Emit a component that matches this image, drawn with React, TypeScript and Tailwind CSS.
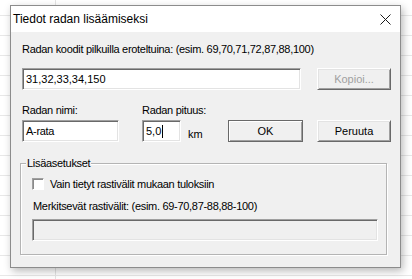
const sunken =
  "bg-white border border-t-[#a0a0a0] border-l-[#a0a0a0] border-b-white border-r-white shadow-[inset_1px_1px_0_#696969,inset_-1px_-1px_0_#e3e3e3]";

function Button({ label, disabled, isDefault, className }: { label: string; disabled?: boolean; isDefault?: boolean; className?: string }) {
  return (
    <div
      className={
        "flex items-center justify-center bg-[#f0f0f0] text-[11px] " +
        (isDefault
          ? "border border-[#696969] shadow-[inset_1px_1px_0_#fff,inset_-1px_-1px_0_#a0a0a0] "
          : "border border-t-white border-l-white border-b-[#696969] border-r-[#696969] shadow-[inset_1px_1px_0_#e3e3e3,inset_-1px_-1px_0_#a0a0a0] ") +
        (disabled ? "text-[#a0a0a0] " : "text-black ") +
        (className ?? "")
      }
    >
      {label}
    </div>
  );
}

export default function App() {
  return (
    <div
      className="w-[412px] h-[279px] overflow-hidden bg-white pl-[10px] pt-[5px] bg-[linear-gradient(to_right,transparent_55px,#e4e4e4_55px,#e4e4e4_56px,transparent_56px),repeating-linear-gradient(to_bottom,transparent_0px,transparent_15px,#e8e8e8_15px,#e8e8e8_16px,transparent_16px,transparent_20px)]"
      style={{ fontFamily: '"Liberation Sans", Arial, sans-serif' }}
    >
      <div className="w-[391px] h-[263px] border border-[#8c8c8c] bg-[#f0f0f0] shadow-[2px_3px_8px_rgba(0,0,0,0.28)] flex flex-col">
        {/* title bar */}
        <div className="h-[26px] bg-white flex items-center pl-[2px] pr-[9px]">
          <span className="text-[12px] text-black">Tiedot radan lisäämiseksi</span>
          <svg className="ml-auto" width="11" height="11" viewBox="0 0 11 11">
            <path d="M0.5 0.5 L10.5 10.5 M10.5 0.5 L0.5 10.5" stroke="#1a1a1a" strokeWidth="1" />
          </svg>
        </div>

        {/* body */}
        <div className="flex flex-col pl-[11px] pr-[9px] text-[11px] text-black">
          <div className="mt-[10px] h-[14px] leading-[14px] tracking-[-0.3px]">
            Radan koodit pilkuilla eroteltuina: (esim. 69,70,71,72,87,88,100)
          </div>

          <div className="mt-[12px] flex items-center">
            <div className={sunken + " w-[279px] h-[22px] flex items-center pl-[3px]"}>31,32,33,34,150</div>
            <Button label="Kopioi..." disabled className="ml-auto w-[74px] h-[22px]" />
          </div>

          <div className="mt-[13px] flex h-[14px] leading-[14px] tracking-[-0.3px]">
            <span className="w-[120px]">Radan nimi:</span>
            <span>Radan pituus:</span>
          </div>

          <div className="mt-[3px] flex items-center">
            <div className={sunken + " w-[97px] h-[22px] flex items-center pl-[3px] tracking-[-0.3px]"}>A-rata</div>
            <div className={sunken + " ml-[23px] w-[39px] h-[22px] flex items-center pl-[3px]"}>
              5,0<span className="ml-px w-px h-[13px] bg-black" />
            </div>
            <span className="ml-[7px] mt-[6px] w-[40px]">km</span>
            <Button label="OK" isDefault className="w-[75px] h-[22px]" />
            <Button label="Peruuta" className="ml-auto w-[74px] h-[22px]" />
          </div>
        </div>

        {/* group box */}
        <div className="relative ml-[9px] mt-[20px] w-[367px] h-[92px] border border-[#b4b4b4] shadow-[inset_1px_1px_0_#fff,1px_1px_0_#fff] text-[11px] text-black">
          <span className="absolute -top-[8px] left-[5px] bg-[#f0f0f0] px-px leading-[14px] tracking-[-0.3px]">Lisäasetukset</span>
          <div className="mt-[13px] ml-[11px] flex items-center">
            <div className="w-[12px] h-[12px] bg-white border border-t-[#a0a0a0] border-l-[#a0a0a0] border-b-white border-r-white shadow-[inset_1px_1px_0_#8a8a8a]" />
            <span className="ml-[6px] leading-[14px] tracking-[-0.3px]">Vain tietyt rastivälit mukaan tuloksiin</span>
          </div>
          <div className="mt-[8px] ml-[12px] leading-[14px] tracking-[-0.3px]">
            Merkitsevät rastivälit: (esim. 69-70,87-88,88-100)
          </div>
          <div className="mt-[6px] ml-[11px] w-[346px] h-[22px] border border-t-[#a0a0a0] border-l-[#a0a0a0] border-b-white border-r-white shadow-[inset_1px_1px_0_#696969,inset_-1px_-1px_0_#e3e3e3] bg-[#f0f0f0]" />
        </div>
      </div>
    </div>
  );
}
